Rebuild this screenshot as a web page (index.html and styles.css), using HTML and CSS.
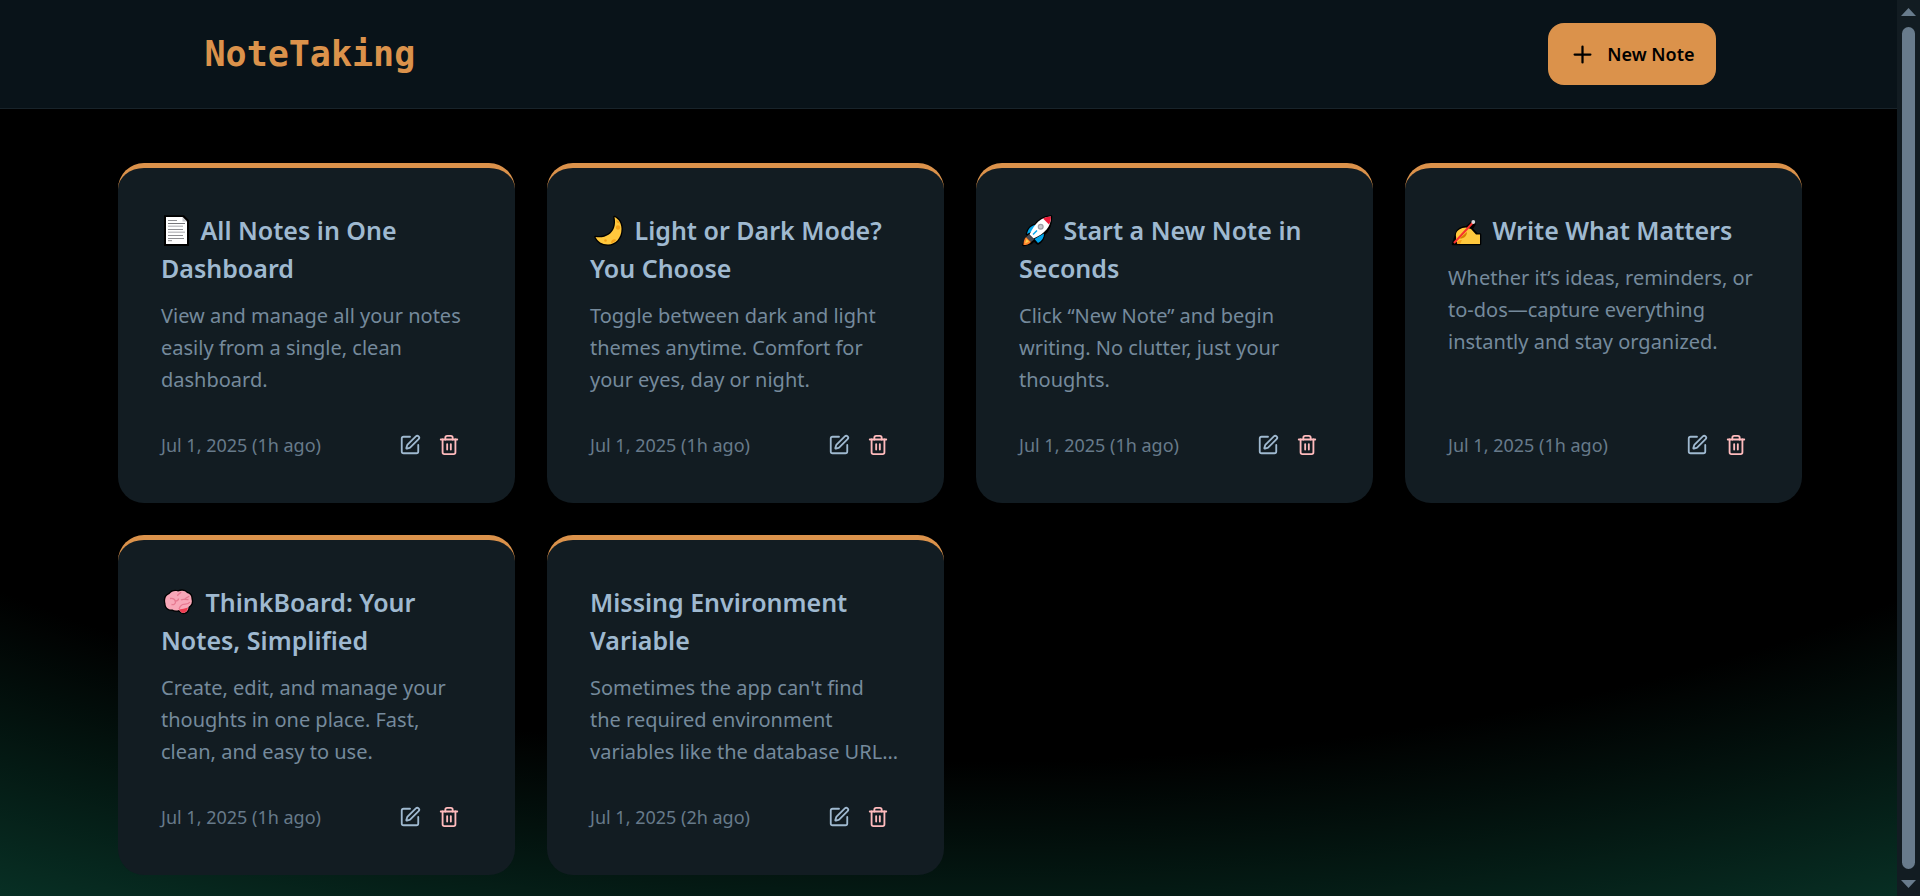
FILE: index.html
```html
<!DOCTYPE html>
<html lang="en">
<head>
<meta charset="utf-8">
<title>NoteTaking</title>
<link rel="stylesheet" href="styles.css">
</head>
<body>
<svg class="sprite" aria-hidden="true">
  <symbol id="edit" viewBox="0 0 24 24"><path d="M12 3H5a2 2 0 0 0-2 2v14a2 2 0 0 0 2 2h14a2 2 0 0 0 2-2v-7"/><path d="M18.375 2.625a1 1 0 0 1 3 3l-9.013 9.014a2 2 0 0 1-.853.505l-2.873.84a.5.5 0 0 1-.62-.62l.84-2.873a2 2 0 0 1 .506-.852z"/></symbol>
  <symbol id="trash" viewBox="0 0 24 24"><path d="M3 6h18"/><path d="M19 6v14c0 1-1 2-2 2H7c-1 0-2-1-2-2V6"/><path d="M8 6V4c0-1 1-2 2-2h4c1 0 2 1 2 2v2"/><path d="M10 11v6"/><path d="M14 11v6"/></symbol>
</svg>

<header class="topbar">
  <div class="topbar-inner">
    <h1 class="brand">NoteTaking</h1>
    <a class="new-note" href="#new">
      <svg class="plus" viewBox="0 0 24 24" aria-hidden="true"><path d="M5 12h14"/><path d="M12 5v14"/></svg>
      <span>New Note</span>
    </a>
  </div>
</header>

<main class="board">
  <article class="card">
    <h2 class="card-title"><svg class="emoji emoji-narrow" viewBox="0 0 31 32" aria-hidden="true"><path d="M3 .3h20l5 5V31H3z" fill="#000"/><path d="M5 2h16.500l4.500 4.500V29H5z" fill="#fff"/><path d="M21.500 2v4.500H26z" fill="#c8c8cc"/><path d="M7 5.500h9M7 14.500h15M7 20.500h15M7 23.500h16M7 25.700h4" stroke="#8f8f93" stroke-width="1"/><path d="M7 8.500h17" stroke="#77777b" stroke-width="1"/><path d="M7 11.300h15M7 17.300h17" stroke="#c4c4c7" stroke-width="1.600"/></svg> All Notes in One Dashboard</h2>
    <p class="card-text">View and manage all your notes easily from a single, clean dashboard.</p>
    <footer class="card-foot"><time>Jul 1, 2025 (1h ago)</time><div class="actions"><a class="edit" href="#edit" aria-label="Edit note"><svg class="icon"><use href="#edit"/></svg></a><button class="delete" type="button" aria-label="Delete note"><svg class="icon"><use href="#trash"/></svg></button></div></footer>
  </article>

  <article class="card">
    <h2 class="card-title"><svg class="emoji" viewBox="0 0 36 32" aria-hidden="true"><path d="M24.500 2c4 2 7 6 7 12 0 9-6 15.500-13.500 15.500-6 0-10.500-3-12.500-7.500 9 1.500 16-2.500 18.500-9 1.300-3.500 1.300-7.500.5-11z" fill="#ffc83d" stroke="#000" stroke-width="2.600" stroke-linejoin="round"/><path d="M24.500 2c4 2 7 6 7 12 0 9-6 15.500-13.500 15.500-6 0-10.500-3-12.500-7.500 9 1.500 16-2.500 18.500-9 1.300-3.500 1.300-7.500.5-11z" fill="#ffc83d"/><circle cx="28" cy="12.500" r="2.200" fill="#f5a21b"/><circle cx="15.500" cy="25.500" r="1.300" fill="#f5a21b"/><path d="M21 28.500c0-4 3-5 5.500-3.500a14 14 0 0 1-5.500 3.500zM26 5l3 1.500 1 2-3-1z" fill="#f5a21b"/></svg> Light or Dark Mode? You Choose</h2>
    <p class="card-text">Toggle between dark and light themes anytime. Comfort for your eyes, day or night.</p>
    <footer class="card-foot"><time>Jul 1, 2025 (1h ago)</time><div class="actions"><a class="edit" href="#edit" aria-label="Edit note"><svg class="icon"><use href="#edit"/></svg></a><button class="delete" type="button" aria-label="Delete note"><svg class="icon"><use href="#trash"/></svg></button></div></footer>
  </article>

  <article class="card">
    <h2 class="card-title"><svg class="emoji" viewBox="0 0 36 32" aria-hidden="true"><path d="M32 1.500c-7 .5-12 3-15.500 8.500-4 0-7.500 4-8.500 9l3 1-3.500 3-3 7 7.500-2 3-3 4 3.500c4-2.500 5.500-6 6-9.500 5-4 7-9.500 7-17.500z" fill="#000" stroke="#000" stroke-width="2.600" stroke-linejoin="round"/><path d="M16.500 10c-4.500.5-7.500 4-8.500 9l6-3z" fill="#00a6ed"/><path d="M25 18.500c0 4-2 7.500-6 9.500l-3.500-4z" fill="#00a6ed"/><path d="M32 1.500C21.500 2 16 8 10.500 19.500l4 4C26 18.500 32 12 32 1.500z" fill="#fff"/><path d="M32 1.500c-3.200.2-5.700.8-8 2l6 6c1.300-2.300 2-5 2-8z" fill="#ee1c3a"/><circle cx="21.700" cy="11.700" r="3" fill="#9c9ca3"/><circle cx="21.700" cy="11.700" r="1.800" fill="#c9c9ce"/><path d="M18 15.500l-4 4" stroke="#00a6ed" stroke-width="1.500"/><path d="M10 19.500l5 5-3 2.500-5-5z" fill="#4b4b52"/><path d="M7 22l5 5c-2 2.500-4.500 3-7.500 3 0-3 .5-6 2.500-8z" fill="#ff822d"/><path d="M7.500 24l2.500 2.500-4 2z" fill="#ffd04a"/></svg> Start a New Note in Seconds</h2>
    <p class="card-text">Click “New Note” and begin writing. No clutter, just your thoughts.</p>
    <footer class="card-foot"><time>Jul 1, 2025 (1h ago)</time><div class="actions"><a class="edit" href="#edit" aria-label="Edit note"><svg class="icon"><use href="#edit"/></svg></a><button class="delete" type="button" aria-label="Delete note"><svg class="icon"><use href="#trash"/></svg></button></div></footer>
  </article>

  <article class="card">
    <h2 class="card-title"><svg class="emoji" viewBox="0 0 36 32" aria-hidden="true"><path d="M24 7.500L19 12c-5 0-10 3-10.500 6.500l-2 6.500-1.500 4h27v-9.500h-3L23.500 14l3-5z" fill="#000" stroke="#000" stroke-width="2.600" stroke-linejoin="round"/><path d="M18 12.500c-5 0-9.500 3-10 6.500-.5 2 .5 3 0 5.500-.3 2 1.500 4.500 4 4.500h20v-9.500h-4l-5-5.500z" fill="#ffc83d"/><path d="M19 17c0 4-3.500 7-7.500 6.500z" fill="#d67d00"/><path d="M9 29c0-2.500 2-4 5-4l-2 4z" fill="#f5a21b"/><path d="M25 7.500L6 28" stroke="#f8312f" stroke-width="2"/><circle cx="25.300" cy="7" r="1.900" fill="#d9d9de"/></svg> Write What Matters</h2>
    <p class="card-text">Whether it’s ideas, reminders, or to-dos—capture everything instantly and stay organized.</p>
    <footer class="card-foot"><time>Jul 1, 2025 (1h ago)</time><div class="actions"><a class="edit" href="#edit" aria-label="Edit note"><svg class="icon"><use href="#edit"/></svg></a><button class="delete" type="button" aria-label="Delete note"><svg class="icon"><use href="#trash"/></svg></button></div></footer>
  </article>

  <article class="card">
    <h2 class="card-title"><svg class="emoji" viewBox="0 0 36 32" aria-hidden="true"><path d="M17 4.500c4-1.500 7-1 9 1.500 3 .5 4.500 3 4.500 6 1 3 0 6-3 8 0 3-2 5.500-5 6-2.500 0-3-1.500-4.500-3-3 1-5 .5-6.500-.5-4 .5-7-2-7-6-1-4 0-8 4-9.500 2-2.500 5-3.500 8.500-2.500z" fill="#f8a7b8" stroke="#000" stroke-width="2.600" stroke-linejoin="round"/><path d="M17 4.500c4-1.500 7-1 9 1.500 3 .5 4.500 3 4.500 6 1 3 0 6-3 8 0 3-2 5.500-5 6-2.500 0-3-1.500-4.500-3-3 1-5 .5-6.500-.5-4 .5-7-2-7-6-1-4 0-8 4-9.500 2-2.500 5-3.500 8.500-2.500z" fill="#f8a7b8"/><path d="M18 22.500c3-.5 6-1 9-2-.5 3-2 5-4.500 5.500-2.500 0-3-1.500-4.500-3.500z" fill="#ee3e52"/><path d="M20 5c-1 2-3 1.500-3.500 4M9 11.500c3-.5 5 1 5.500 3.500 0 2-2 3-4 2.500M14.500 14c2 0 3-1 3-2.500M28 9c-1 2-4 1.500-4.500 4M20 13c2-1.500 5 0 7.500-.5M29 15c-2 3-5 1.500-7.500 2.500-2 1-3 2.500-3.500 4.500" fill="none" stroke="#e67a91" stroke-width="1.300"/></svg> ThinkBoard: Your Notes, Simplified</h2>
    <p class="card-text">Create, edit, and manage your thoughts in one place. Fast, clean, and easy to use.</p>
    <footer class="card-foot"><time>Jul 1, 2025 (1h ago)</time><div class="actions"><a class="edit" href="#edit" aria-label="Edit note"><svg class="icon"><use href="#edit"/></svg></a><button class="delete" type="button" aria-label="Delete note"><svg class="icon"><use href="#trash"/></svg></button></div></footer>
  </article>

  <article class="card">
    <h2 class="card-title">Missing Environment Variable</h2>
    <p class="card-text">Sometimes the app can't find<br>the required environment<br>variables like the database URL…</p>
    <footer class="card-foot"><time>Jul 1, 2025 (2h ago)</time><div class="actions"><a class="edit" href="#edit" aria-label="Edit note"><svg class="icon"><use href="#edit"/></svg></a><button class="delete" type="button" aria-label="Delete note"><svg class="icon"><use href="#trash"/></svg></button></div></footer>
  </article>
</main>

<div class="scrollbar" aria-hidden="true">
  <svg class="arrow" viewBox="0 0 15 8"><path d="M0 8L7.500 0 15 8z"/></svg>
  <div class="thumb"></div>
  <svg class="arrow" viewBox="0 0 15 8"><path d="M0 0h15L7.500 8z"/></svg>
</div>
</body>
</html>
```

FILE: styles.css
```css
:root {
  --primary: #db924b;
  --base-100: #121c22;
  --base-300: #091319;
  --content: #9fb9d0;
}

* { box-sizing: border-box; }

html {
  background: var(--base-100);
  scrollbar-width: none;
}

body {
  margin: 0;
  min-height: 100vh;
  background: radial-gradient(125% 125% at 50% 10%, #000 60%, #00ff9d40 100%);
  color: var(--content);
  font-family: "Segoe UI", "Noto Sans", sans-serif;
  font-size: 20px;
  line-height: 32px;
}

h1, h2, p { margin: 0; }

.sprite {
  display: none;
}

/* Header */
.topbar {
  background: var(--base-300);
  border-bottom: 1px solid #18232a;
}

.topbar-inner {
  display: flex;
  align-items: center;
  justify-content: space-between;
  max-width: 1511px;
  margin: 0 auto;
  padding: 23px 0;
}

.brand {
  color: var(--primary);
  font-family: Consolas, "DejaVu Sans Mono", monospace;
  font-size: 35px;
  font-weight: 700;
  line-height: 48px;
}

.new-note {
  display: flex;
  align-items: center;
  gap: 11px;
  height: 62px;
  padding: 0 21px;
  border-radius: 16px;
  background: var(--primary);
  color: #000;
  font-size: 18px;
  font-weight: 600;
  text-decoration: none;
}

.plus {
  width: 27px;
  height: 27px;
}

.plus, .icon {
  fill: none;
  stroke: currentColor;
  stroke-width: 2;
  stroke-linecap: round;
  stroke-linejoin: round;
}

/* Notes */
.board {
  display: grid;
  grid-template-columns: repeat(4, minmax(0, 1fr));
  gap: 32px;
  max-width: 1684px;
  margin: 0 auto;
  padding: 54px 0 21px;
}

.card {
  display: flex;
  flex-direction: column;
  gap: 13px;
  padding: 43px 43px 42px;
  border-top: 5px solid var(--primary);
  border-radius: 26px;
  background: var(--base-100);
}

.card-title {
  font-size: 25px;
  font-weight: 600;
  line-height: 38px;
}

.card-text { color: #758a9c; }

.emoji {
  width: 36px;
  height: 32px;
  margin-right: 2px;
  vertical-align: -7px;
}

.emoji-narrow { width: 31px; }

.card-foot {
  display: flex;
  align-items: center;
  justify-content: space-between;
  margin-top: auto;
  padding-top: 20px;
  color: #677a8a;
  font-size: 18px;
}

.actions {
  display: flex;
  align-items: center;
  gap: 5px;
}

.edit, .delete {
  display: flex;
  align-items: center;
  height: 32px;
}

.edit { color: var(--content); }

.delete {
  padding: 0 12px;
  border: 0;
  background: none;
  color: #ffbbbd;
}

.icon {
  width: 22px;
  height: 22px;
}

/* Window scrollbar, drawn over the page edge */
.scrollbar {
  position: fixed;
  inset: 0 0 0 auto;
  display: flex;
  flex-direction: column;
  align-items: center;
  gap: 11px;
  width: 23px;
  padding: 8px 0;
  background: var(--base-100);
}

.arrow {
  width: 15px;
  height: 8px;
  fill: #687b8c;
}

.thumb {
  flex: 1;
  width: 13px;
  border-radius: 7px;
  background: #687b8c;
}
```
